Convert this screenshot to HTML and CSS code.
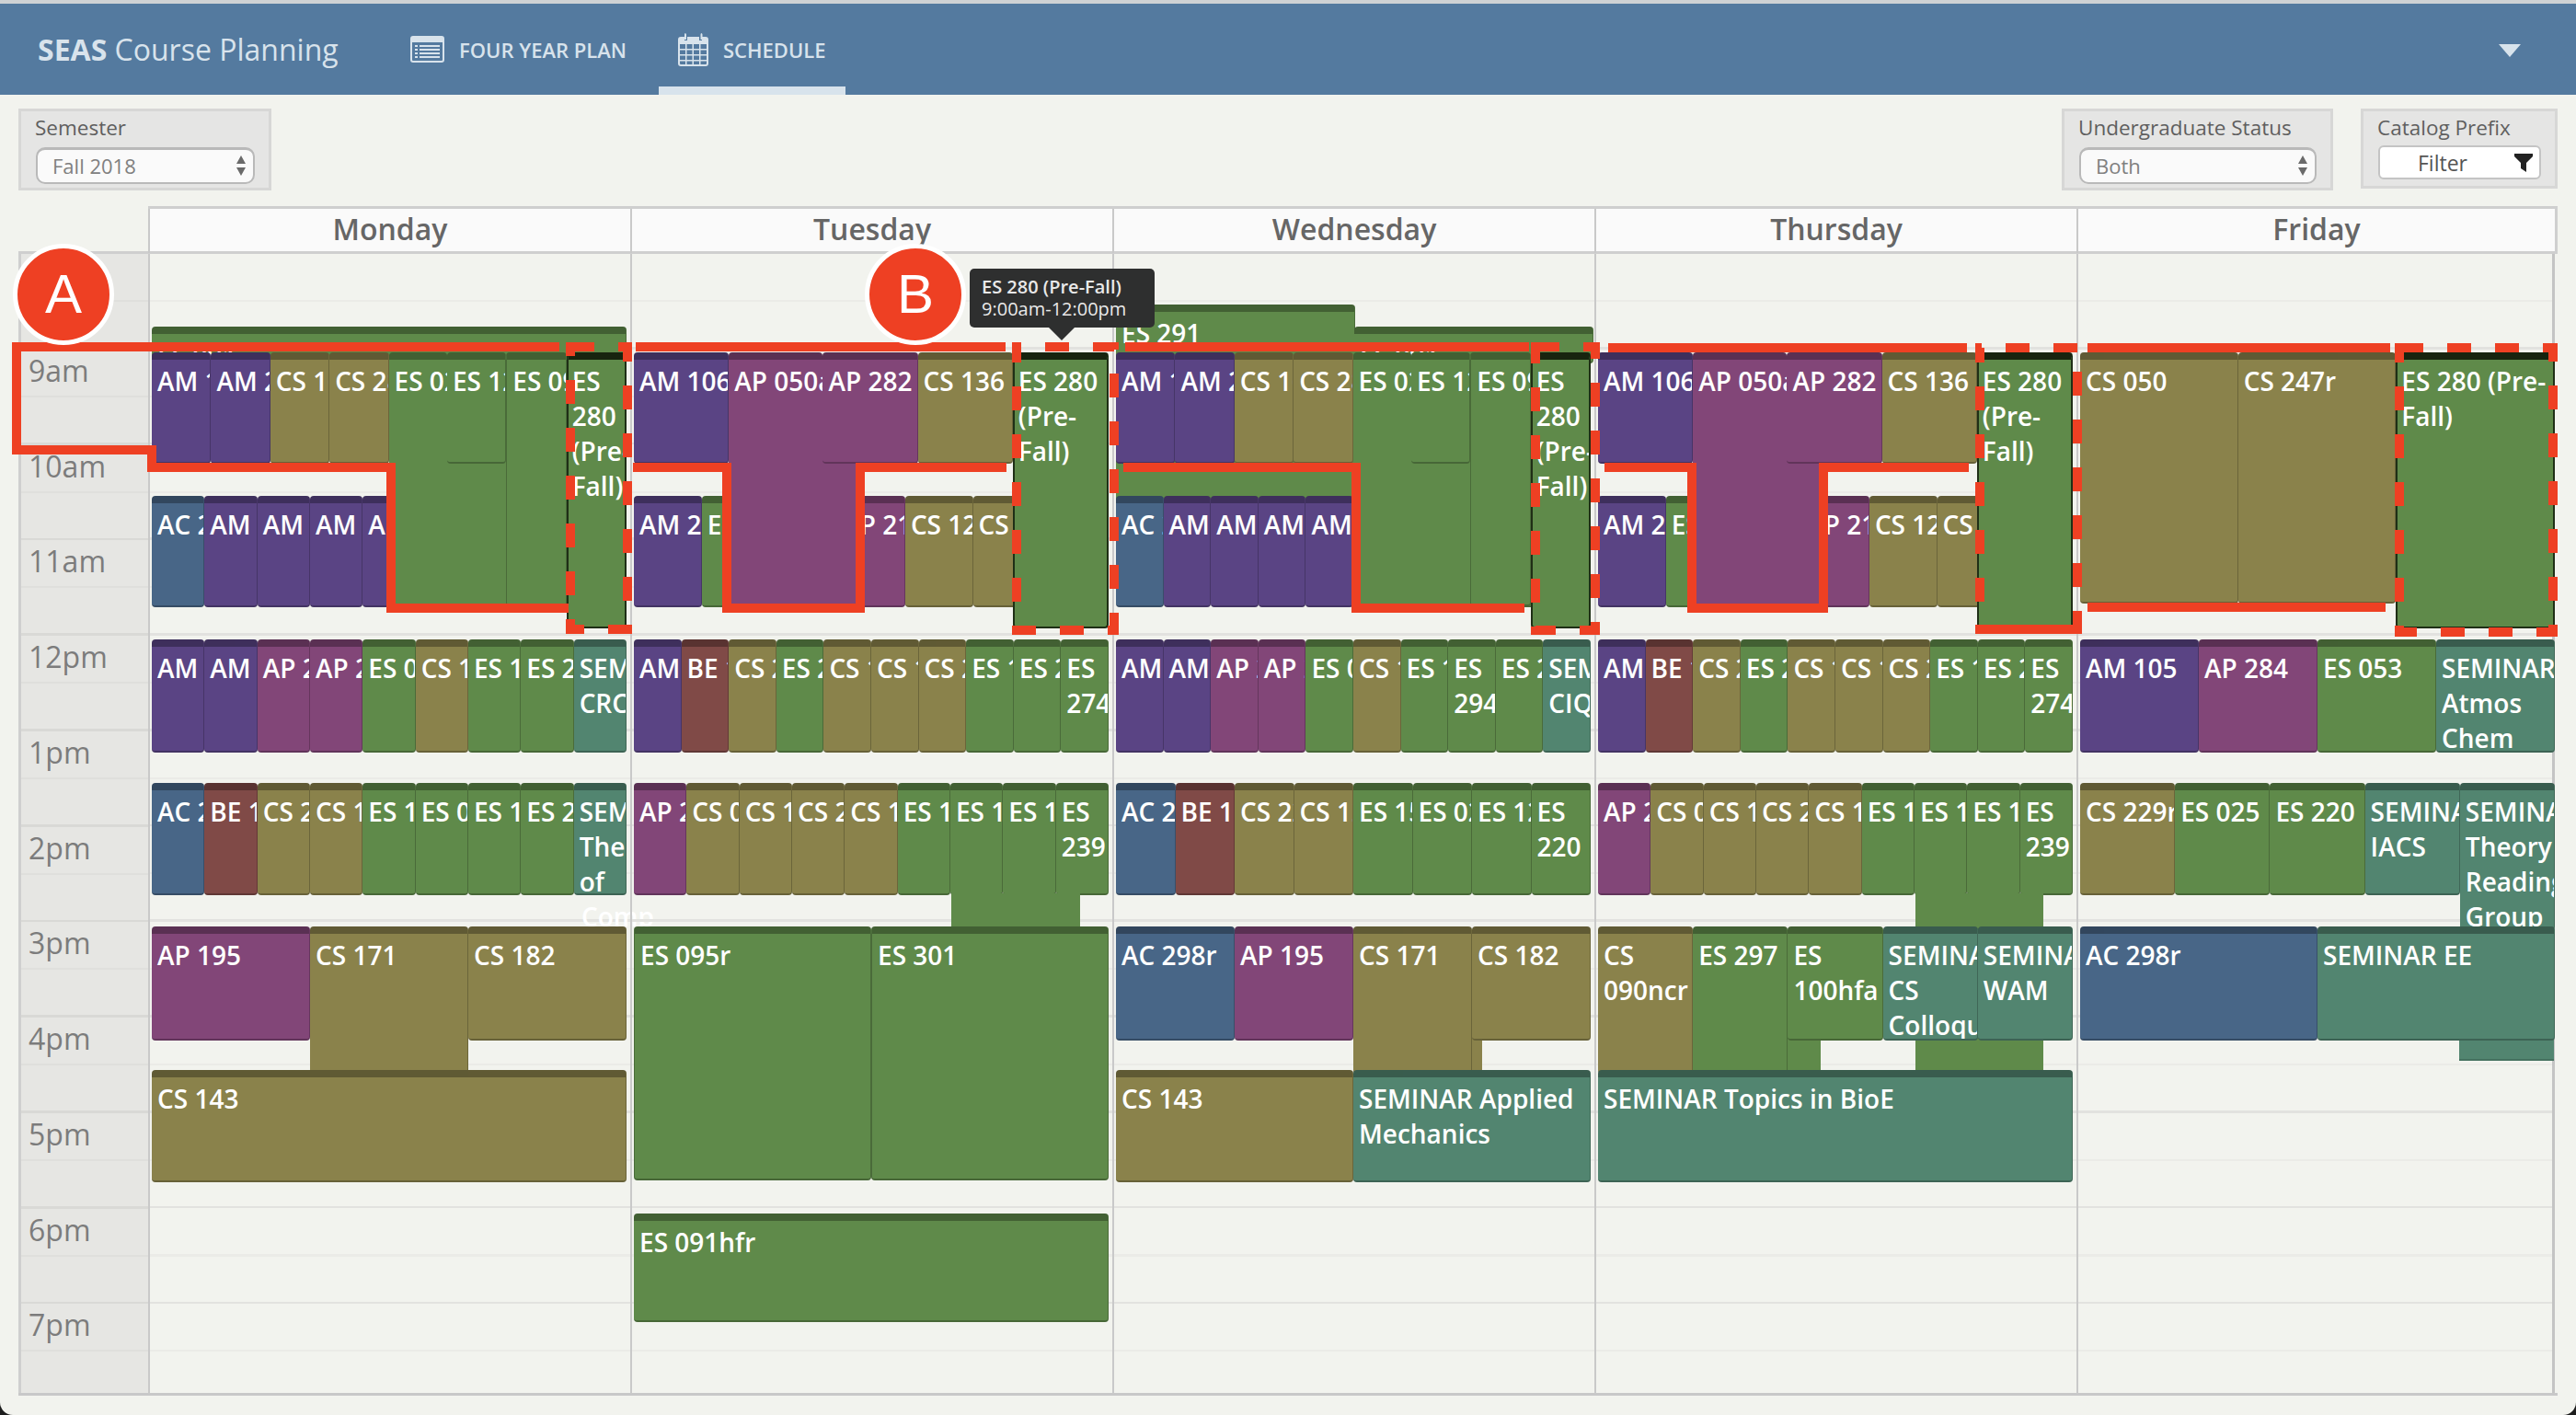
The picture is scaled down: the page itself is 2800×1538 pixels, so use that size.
FILE: index.html
```html
<!DOCTYPE html>
<html>
<head>
    <meta charset="utf-8">
    <title>SEAS Course Planning</title>
    <link rel="stylesheet" href="styles.css">
</head>
<body>
<div class="page">
    <div class="nav">
        <div class="brand"><b>SEAS</b> Course Planning</div>
        <div class="nav-item">
            <svg class="ico-plan" width="37" height="29" viewBox="0 0 37 29"><path fill-rule="evenodd" d="M3 0h31a3 3 0 0 1 3 3v23a3 3 0 0 1-3 3H3a3 3 0 0 1-3-3V3a3 3 0 0 1 3-3zM2 7v19a1 1 0 0 0 1 1h31a1 1 0 0 0 1-1V7z"/><path d="M5 10h3v2H5zM5 14h3v2H5zM5 18h3v2H5zM5 22h3v2H5zM10 10h22v2H10zM10 14h22v2H10zM10 18h22v2H10zM10 22h22v2H10z"/></svg>
            <span>FOUR YEAR PLAN</span>
        </div>
        <div class="nav-item active">
            <svg class="ico-cal" width="33" height="36" viewBox="0 0 33 36"><path fill-rule="evenodd" d="M3 4h4v4h3V4h13v4h3V4h4a3 3 0 0 1 3 3v26a3 3 0 0 1-3 3H3a3 3 0 0 1-3-3V7a3 3 0 0 1 3-3zM2 12v21a1 1 0 0 0 1 1h27a1 1 0 0 0 1-1V12z"/><path d="M7.500 0a1.500 1.500 0 0 1 1.500 1.500V7H7V1.500zM25 0a1.500 1.500 0 0 1 1.500 1.500V7h-2V1.500zM8 12h1.500v22H8zM15.500 12H17v22h-1.500zM23 12h1.500v22H23zM2 17h29v1.500H2zM2 23h29v1.500H2zM2 29h29v1.500H2z"/></svg>
            <span>SCHEDULE</span>
        </div>
        <div class="nav-caret"></div>
    </div>

    <div class="toolbar">
        <div class="filter w-sem">
            <label>Semester</label>
            <div class="select">Fall 2018 <svg width="12" height="24" viewBox="0 0 12 24"><path d="M6 1l5 9H1zM6 23l-5-9h10z"/></svg></div>
        </div>
        <div class="filter w-status push">
            <label>Undergraduate Status</label>
            <div class="select">Both <svg width="12" height="24" viewBox="0 0 12 24"><path d="M6 1l5 9H1zM6 23l-5-9h10z"/></svg></div>
        </div>
        <div class="filter w-cat">
            <label>Catalog Prefix</label>
            <div class="btn-filter">Filter <svg width="20" height="20" viewBox="0 0 20 20"><path d="M0 0h20v3l-7 7v10l-6-4v-6L0 3z"/></svg></div>
        </div>
    </div>

    <div class="cal">
        <div class="cal-head">
            <div>Monday</div><div>Tuesday</div><div>Wednesday</div><div>Thursday</div><div>Friday</div>
        </div>
        <div class="cal-body">
            <div class="times">
                <div class="hour"></div>
                <div class="hour">9am</div>
                <div class="hour">10am</div>
                <div class="hour">11am</div>
                <div class="hour">12pm</div>
                <div class="hour">1pm</div>
                <div class="hour">2pm</div>
                <div class="hour">3pm</div>
                <div class="hour">4pm</div>
                <div class="hour">5pm</div>
                <div class="hour">6pm</div>
                <div class="hour">7pm</div>
            </div>

            <!-- monday -->
            <div class="day">
                <div class="row r-top"><div class="ev es">ES 091</div></div>
                <div class="row r-b">
                    <div class="ev ac">AC 209</div><div class="ev am">AM 205</div><div class="ev am">AM 216</div><div class="ev am">AM 231</div><div class="ev am">AM 254</div><div class="ev es"></div><div class="ev es"></div><div class="ev es"></div><div class="ev es"></div>
                </div>
                <div class="fill es" style="left:262px;top:220px;width:193px;height:163px"></div>
                <div class="row r-a">
                    <div class="ev am">AM 115</div><div class="ev am">AM 221</div><div class="ev cs">CS 165</div><div class="ev cs">CS 283</div><div class="ev es nb">ES 023</div><div class="ev es">ES 123</div><div class="ev es t-a">ES 091</div><div class="ev es hl wrap t-pre">ES 280 (Pre-Fall)</div>
                </div>
                <div class="row r-c">
                    <div class="ev am">AM 105</div><div class="ev am">AM 120</div><div class="ev ap">AP 215</div><div class="ev ap">AP 275</div><div class="ev es">ES 053</div><div class="ev cs">CS 189</div><div class="ev es">ES 128</div><div class="ev es">ES 201</div><div class="ev sem wrap">SEMINAR CRCS</div>
                </div>
                <div class="row r-d">
                    <div class="ev ac">AC 221</div><div class="ev be">BE 110</div><div class="ev cs">CS 229</div><div class="ev cs">CS 121</div><div class="ev es">ES 111</div><div class="ev es">ES 025</div><div class="ev es">ES 143</div><div class="ev es">ES 220</div><div class="ev sem wrap">SEMINAR Theory of Computation</div>
                </div>
                <div class="spill">Comp</div>
                <div class="row r-e">
                    <div class="ev ap">AP 195</div><div class="ev cs t-e">CS 171</div><div class="ev cs">CS 182</div>
                </div>
                <div class="row r-f"><div class="ev cs">CS 143</div></div>
            </div>

            <!-- tuesday -->
            <div class="day">
                <div class="row r-b">
                    <div class="ev am">AM 221</div><div class="ev es">ES 120</div><div class="ev ap"></div><div class="ev ap">AP 216</div><div class="ev cs">CS 124</div><div class="ev cs">CS 187</div><div class="ev es"></div>
                </div>
                <div class="fill ap" style="left:107px;top:220px;width:136px;height:163px"></div>
                <div class="row r-a">
                    <div class="ev am">AM 106</div><div class="ev ap nb">AP 050a</div><div class="ev ap">AP 282</div><div class="ev cs">CS 136</div><div class="ev es hl wrap t-pre">ES 280 (Pre-Fall)</div>
                </div>
                <div class="row r-c">
                    <div class="ev am">AM 107</div><div class="ev be">BE 191</div><div class="ev cs">CS 205</div><div class="ev es">ES 247</div><div class="ev cs">CS 181</div><div class="ev cs">CS 191</div><div class="ev cs">CS 227</div><div class="ev es">ES 156</div><div class="ev es">ES 201</div><div class="ev es wrap">ES 274</div>
                </div>
                <div class="row r-d">
                    <div class="ev ap">AP 216</div><div class="ev cs">CS 091</div><div class="ev cs">CS 121</div><div class="ev cs">CS 244</div><div class="ev cs">CS 146</div><div class="ev es">ES 115</div><div class="ev es">ES 125</div><div class="ev es">ES 173</div><div class="ev es wrap">ES 239</div>
                </div>
                <div class="fill es" style="left:347px;top:695px;width:140px;height:40px"></div>
                <div class="row r-e">
                    <div class="ev es t-a">ES 095r</div><div class="ev es t-a">ES 301</div>
                </div>
                <div class="row r-g"><div class="ev es">ES 091hfr</div></div>
            </div>

            <!-- wednesday -->
            <div class="day">
                <div class="row r-top half" style="top:55px;height:215px"><div class="ev es">ES 291</div></div>
                <div class="row r-top half" style="left:261px"><div class="ev es">ES 091</div></div>
                <div class="row r-b">
                    <div class="ev ac">AC 209</div><div class="ev am">AM 205</div><div class="ev am">AM 216</div><div class="ev am">AM 231</div><div class="ev am">AM 254</div><div class="ev es"></div><div class="ev es"></div><div class="ev es"></div><div class="ev es"></div><div class="ev es"></div>
                </div>
                <div class="fill es" style="left:261px;top:220px;width:194px;height:163px"></div>
                <div class="row r-a">
                    <div class="ev am">AM 115</div><div class="ev am">AM 221</div><div class="ev cs">CS 165</div><div class="ev cs">CS 283</div><div class="ev es nb">ES 023</div><div class="ev es">ES 123</div><div class="ev es t-a">ES 091</div><div class="ev es hl wrap t-pre">ES 280 (Pre-Fall)</div>
                </div>
                <div class="row r-c">
                    <div class="ev am">AM 105</div><div class="ev am">AM 120</div><div class="ev ap">AP 215</div><div class="ev ap">AP 275</div><div class="ev es">ES 053</div><div class="ev cs">CS 189</div><div class="ev es">ES 128</div><div class="ev es wrap">ES 294</div><div class="ev es">ES 201</div><div class="ev sem wrap">SEMINAR CIQM</div>
                </div>
                <div class="row r-d">
                    <div class="ev ac">AC 221</div><div class="ev be">BE 110</div><div class="ev cs">CS 229</div><div class="ev cs">CS 121</div><div class="ev es">ES 159</div><div class="ev es">ES 025</div><div class="ev es">ES 123</div><div class="ev es wrap">ES 220</div>
                </div>
                <div class="fill cs" style="left:262px;top:850px;width:138px;height:40px"></div>
                <div class="row r-e">
                    <div class="ev ac">AC 298r</div><div class="ev ap">AP 195</div><div class="ev cs t-e">CS 171</div><div class="ev cs">CS 182</div>
                </div>
                <div class="row r-f">
                    <div class="ev cs">CS 143</div><div class="ev sem wrap">SEMINAR Applied Mechanics</div>
                </div>
            </div>

            <!-- thursday -->
            <div class="day">
                <div class="row r-b">
                    <div class="ev am">AM 221</div><div class="ev es">ES 120</div><div class="ev ap"></div><div class="ev ap">AP 216</div><div class="ev cs">CS 124</div><div class="ev cs">CS 187</div><div class="ev es"></div>
                </div>
                <div class="fill ap" style="left:105px;top:220px;width:145px;height:163px"></div>
                <div class="row r-a">
                    <div class="ev am">AM 106</div><div class="ev ap nb">AP 050a</div><div class="ev ap">AP 282</div><div class="ev cs">CS 136</div><div class="ev es hl wrap t-pre">ES 280 (Pre-Fall)</div>
                </div>
                <div class="row r-c">
                    <div class="ev am">AM 107</div><div class="ev be">BE 191</div><div class="ev cs">CS 205</div><div class="ev es">ES 247</div><div class="ev cs">CS 181</div><div class="ev cs">CS 191</div><div class="ev cs">CS 227</div><div class="ev es">ES 156</div><div class="ev es">ES 201</div><div class="ev es wrap">ES 274</div>
                </div>
                <div class="row r-d">
                    <div class="ev ap">AP 216</div><div class="ev cs">CS 091</div><div class="ev cs">CS 121</div><div class="ev cs">CS 244</div><div class="ev cs">CS 146</div><div class="ev es">ES 115</div><div class="ev es">ES 125</div><div class="ev es">ES 173</div><div class="ev es wrap">ES 239</div>
                </div>
                <div class="fill es" style="left:347px;top:695px;width:139px;height:40px"></div>
                <div class="fill es" style="left:347px;top:850px;width:139px;height:40px"></div>
                <div class="fill es" style="left:105px;top:850px;width:139px;height:40px"></div>
                <div class="row r-e">
                    <div class="ev cs wrap t-e">CS 090ncr</div><div class="ev es t-e">ES 297</div><div class="ev es wrap">ES 100hfa</div><div class="ev sem wrap">SEMINAR CS Colloquium</div><div class="ev sem wrap">SEMINAR WAM</div>
                </div>
                <div class="row r-f"><div class="ev sem">SEMINAR Topics in BioE</div></div>
            </div>

            <!-- friday -->
            <div class="day">
                <div class="row r-a">
                    <div class="ev cs t-fri">CS 050</div><div class="ev cs t-fri">CS 247r</div><div class="ev es hl wrap t-pre">ES 280 (Pre-Fall)</div>
                </div>
                <div class="row r-c">
                    <div class="ev am">AM 105</div><div class="ev ap">AP 284</div><div class="ev es">ES 053</div><div class="ev sem wrap">SEMINAR Atmos Chem</div>
                </div>
                <div class="row r-d">
                    <div class="ev cs">CS 229r</div><div class="ev es">ES 025</div><div class="ev es">ES 220</div><div class="ev sem wrap">SEMINAR IACS</div><div class="ev sem wrap t-e">SEMINAR Theory Reading Group</div>
                </div>
                <div class="fill sem" style="left:414px;top:850px;width:103px;height:27px"></div>
                <div class="row r-e">
                    <div class="ev ac">AC 298r</div><div class="ev sem">SEMINAR EE</div>
                </div>
            </div>
        </div>
    </div>

    <!-- annotations drawn over the screenshot -->
    <svg class="marks" width="2800" height="1538" viewBox="0 0 2800 1538">
        <path class="solid" d="M608 377H18V489H165V508H425V661H618"/>
        <path class="solid" d="M691 377H1093M688 508H790V661H935V508H1094"/>
        <path class="solid" d="M1223 377H1662M1221 508H1474V661H1657"/>
        <path class="solid" d="M1748 378H2138M1744 508H1839V661H1982V508H2140"/>
        <path class="solid" d="M2269 378H2598M2269 660H2593"/>
        <path class="solid" d="M2147 684H2262"/>
        <path class="dash" d="M620 377H682V684H620Z"/>
        <path class="dash" stroke-dashoffset="21" d="M1105 377H1211V685H1105Z"/>
        <path class="dash" d="M1669 377H1734V685H1669Z"/>
        <path class="dash" stroke-dashoffset="24" d="M2152 378H2258V684H2152Z"/>
        <path class="dash" d="M2608 378H2775V687H2608Z"/>
    </svg>
    <div class="badge badge-a">A</div>
    <div class="badge badge-b">B</div>
    <div class="tip">
        <b>ES 280 (Pre-Fall)</b><br>9:00am-12:00pm
    </div>
</div>
</body>
</html>
```

FILE: styles.css
```css
* { box-sizing: border-box; }
html, body { margin: 0; padding: 0; }
body {
 width: 2800px;
 height: 1538px;
 background: #1e1e1e;
 font-family: "Open Sans", "Noto Sans", sans-serif;
 overflow: hidden; }
.page {
 position: relative;
 height: 1538px;
 background: #f2f3ee;
 border-radius: 0 0 14px 14px;
 overflow: hidden; }

/* top bar */
.nav {
 display: flex;
 align-items: stretch;
 height: 103px;
 background: #547a9f;
 border-top: 4px solid #cfd2d4;
 color: #d8e3ec; }
.brand {
 width: 425px;
 padding-left: 41px;
 font-size: 32px;
 line-height: 99px;
 white-space: nowrap; }
.nav-item {
 display: flex;
 align-items: center;
 gap: 16px;
 padding: 0 21px;
 margin-right: 14px;
 font-size: 22px;
 font-weight: 600;
 white-space: nowrap; }
.nav-item svg { fill: #d8e3ec; }
.nav-item.active { box-shadow: inset 0 -9px #d8e3ec; }
.nav-caret {
 margin: 44px 60px 0 auto;
 width: 0;
 height: 0;
 border-left: 12px solid transparent;
 border-right: 12px solid transparent;
 border-top: 14px solid #d8e3ec; }

/* filters */
.toolbar {
 display: flex;
 gap: 30px;
 align-items: flex-start;
 height: 121px;
 padding: 15px 20px 0; }
.filter {
 height: 89px;
 padding: 3px 15px 0 16px;
 background: #e5e5e4;
 border: 3px solid #d7d7d6; }
.filter label {
 display: block;
 height: 30px;
 font-size: 22.500px;
 line-height: 30px;
 color: #5f5f5f;
 margin-left: -1px;
 white-space: nowrap; }
.w-sem { width: 275px; }
.w-status { width: 295px; }
.w-cat { width: 214px; height: 87px; }
.push { margin-left: auto; }
.select {
 display: flex;
 align-items: center;
 justify-content: space-between;
 height: 40px;
 margin-top: 6px;
 padding: 0 7px 2px 16px;
 background: #fafafa;
 border: 2px solid #b9b9b9;
 border-top-width: 3px;
 border-radius: 10px;
 font-size: 22px;
 color: #808080; }
.select svg { fill: #6a6a6a; }
.btn-filter {
 display: flex;
 align-items: center;
 justify-content: space-between;
 height: 37px;
 margin-top: 4px;
 padding: 0 7px 0 41px;
 background: #fff;
 border: 2px solid #c4c4c4;
 border-radius: 6px;
 font-size: 23px;
 color: #555; }
.btn-filter svg { fill: #222; }

/* calendar */
.cal { margin-left: 20px; width: 2760px; }
.cal-head {
 display: flex;
 margin-left: 141px;
 height: 51px;
 background: #fafafa;
 border-top: 3px solid #cfcfcf;
 border-right: 3px solid #cfcfcf; }
.cal-head div {
 flex: 0 0 524px;
 border-left: 2px solid #c9c9c9;
 text-align: center;
 font-size: 32px;
 font-weight: 600;
 line-height: 43px;
 color: #666; }
.cal-head div:last-child { flex-basis: 520px; }
.cal-body {
 display: flex;
 height: 1244px;
 border-top: 3px solid #cfcfcf;
 border-bottom: 3px solid #c8c8c8;
 margin-top: -2px; }
.times {
 flex: 0 0 141px;
 height: 100%;
 background: #e6e6e3;
 border-left: 3px solid #cfcfcf;
 overflow: hidden; }
.hour {
 height: 103.750px;
 padding-left: 8px;
 font-size: 32px;
 line-height: 46px;
 color: #7c7c7c;
 background: repeating-linear-gradient(to bottom, transparent 0 50px, #dfdfdc 50px 52px, transparent 52px 101px, #d9d9d6 101px 103.750px); }
.day {
 position: relative;
 flex: 0 0 524px;
 border-left: 2px solid #c9c9c9;
 background: repeating-linear-gradient(to bottom, transparent 0 50px, #ebebe7 50px 52px, transparent 52px 101px, #e2e2df 101px 103.750px); }
.day:last-child {
 flex-basis: 520px;
 border-right: 3px solid #c4c4c4; }

/* a meeting time: a strip of classes that start together */
.row {
 position: absolute;
 left: 2px;
 width: 516px;
 display: flex;
 align-items: flex-start; }
.r-top { top: 79px; height: 40px; }
.half { width: 260px; }
.r-a { top: 107px; height: 121px; }
.r-b { top: 263px; height: 121px; }
.r-c { top: 419px; height: 123px; }
.r-d { top: 575px; height: 122px; }
.r-e { top: 731px; height: 124px; }
.r-f { top: 887px; height: 122px; }
.r-g { top: 1043px; height: 118px; }

.ev {
 flex: 1 1 0;
 min-width: 0;
 height: 100%;
 padding: 4px 0 0 6px;
 overflow: hidden;
 white-space: nowrap;
 border-top: 8px solid rgba(0,0,0,.3);
 border-right: 1px solid rgba(0,0,0,.22);
 border-bottom: 2px solid rgba(0,0,0,.25);
 border-radius: 4px;
 font-size: 28px;
 font-weight: 600;
 line-height: 38px;
 color: #fff; }
.wrap { white-space: normal; }
.nb {
 border-bottom: 0;
 border-right: 0;
 border-radius: 4px 4px 0 0; }
.t-a { height: 276px; border-left: 1px solid rgba(0,0,0,.22); }
.t-pre { height: 300px; }
.t-fri { height: 273px; }
.t-e { height: 160px; }
.hl {
 border-top-color: #18240f;
 border-left: 2px solid #1f2f16;
 border-right: 2px solid #1f2f16;
 border-bottom-color: #1f2f16;
 padding-left: 4px; }
.fill {
 position: absolute;
 border-bottom: 2px solid rgba(0,0,0,.15); }
.spill {
 position: absolute;
 left: 469px;
 top: 701px;
 font-size: 28px;
 font-weight: 600;
 line-height: 38px;
 color: #fff; }

.am { background-color: #5a4484; }
.ap { background-color: #824678; }
.cs { background-color: #8a824b; }
.es { background-color: #5f8a4a; }
.sem { background-color: #528570; }
.ac { background-color: #486687; }
.be { background-color: #804a47; }

/* annotations */
.marks {
 position: absolute;
 top: 0;
 left: 0;
 pointer-events: none; }
.marks path { fill: none; stroke: #ee4023; stroke-width: 10; }
.marks .dash { stroke-dasharray: 26 26; }
.badge {
 position: absolute;
 top: 265px;
 width: 110px;
 height: 110px;
 background: #ee4023;
 border: 5px solid #fff;
 border-radius: 50%;
 color: #fff;
 font-family: "Liberation Sans", sans-serif;
 font-size: 60px;
 line-height: 100px;
 text-align: center; }
.badge-a { left: 14px; }
.badge-b { left: 940px; }
.tip {
 position: absolute;
 left: 1054px;
 top: 292px;
 width: 201px;
 height: 64px;
 padding: 8px 0 0 13px;
 background: #2e2f2f;
 border-radius: 5px;
 font-size: 20px;
 line-height: 24px;
 color: #e9e9e9;
 white-space: nowrap; }
.tip b { font-weight: 600; }
.tip:after {
 content: "";
 position: absolute;
 left: 86px;
 top: 64px;
 border-left: 14px solid transparent;
 border-right: 14px solid transparent;
 border-top: 14px solid #2e2f2f; }
```
